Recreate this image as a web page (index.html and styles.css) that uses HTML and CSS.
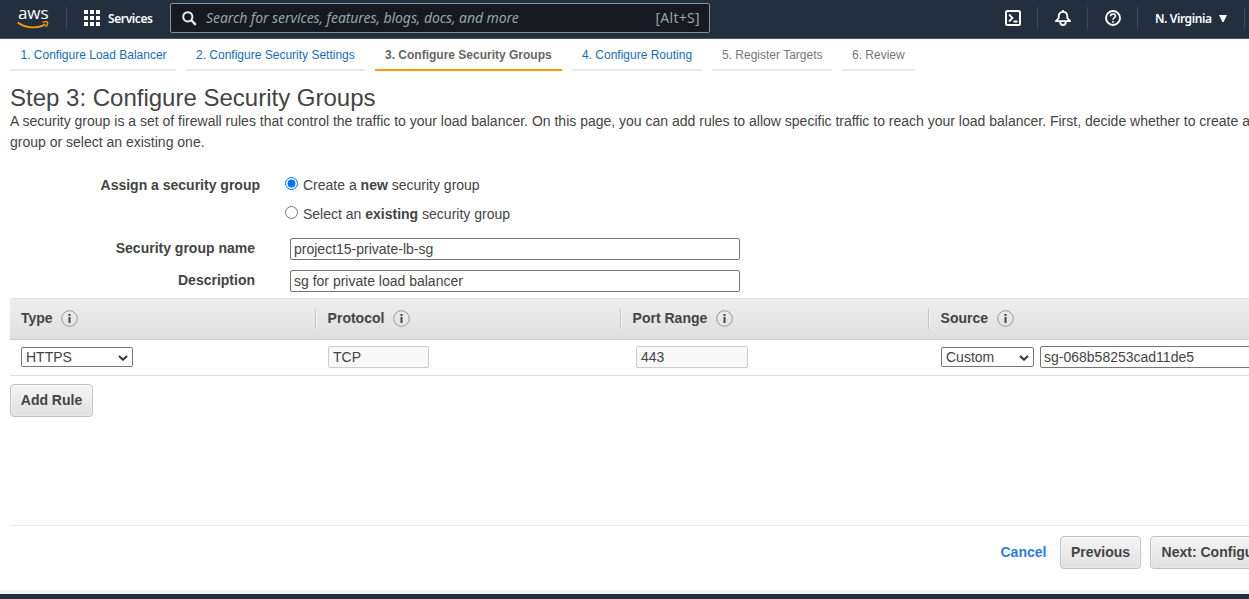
FILE: index.html
```html
<!DOCTYPE html>
<html lang="en">
<head>
<meta charset="utf-8">
<title>Step 3: Configure Security Groups</title>
<link rel="stylesheet" href="styles.css">
</head>
<body>
<header class="topbar">
  <div class="logo"><span class="logo-text">aws</span>
    <svg class="smile" width="32" height="9" viewBox="0 0 32 9" fill="none" stroke="#ff9900"><path d="M.8 1.500C8 7.500 21 7.800 28.500 3.200" stroke-width="1.800"/><path d="M25.500 1.500c2-.8 4.300-.9 5-.2.500.8-.3 3-1.700 4.700" stroke-width="1.300"/></svg>
  </div>
  <div class="services">
    <svg width="16" height="16" viewBox="0 0 16 16" fill="#fff"><path d="M0 0h4v4H0zM6 0h4v4H6zM12 0h4v4h-4zM0 6h4v4H0zM6 6h4v4H6zM12 6h4v4h-4zM0 12h4v4H0zM6 12h4v4H6zM12 12h4v4h-4z"/></svg>
    <span class="services-text">Services</span>
  </div>
  <div class="search">
    <svg width="15" height="15" viewBox="0 0 15 15" fill="none" stroke="#eaeded" stroke-width="2"><circle cx="5.800" cy="5.800" r="4.600"/><path d="M9.200 9.200l4.600 4.600" stroke-width="2.400"/></svg>
    <span class="search-text">Search for services, features, blogs, docs, and more</span>
    <span class="shortcut">[Alt+S]</span>
  </div>
  <div class="tools">
    <div class="tool"><svg width="16" height="16" viewBox="0 0 16 16" fill="none" stroke="#fff" stroke-width="2"><rect x="1" y="1" width="14" height="14" rx="1.500"/><path d="M4 4.500L7.500 8 4 11.500M8.500 11.500H12.500" stroke-width="1.800"/></svg></div>
    <div class="tool"><svg width="16" height="16" viewBox="0 0 16 16" fill="none" stroke="#fff" stroke-width="1.800" stroke-linejoin="round"><path d="M8 0v2M.9 11.200L3.700 8.200V6C4 3.300 5.600 1.800 8 1.800s4 1.500 4.300 4.200v2.200l2.800 3z"/><path d="M5.200 12c0 2 1.100 3 2.800 3s2.800-1 2.800-3"/></svg></div>
    <div class="tool"><svg width="16" height="16" viewBox="0 0 16 16" fill="none" stroke="#fff" stroke-width="1.900"><circle cx="8" cy="8" r="7"/><path d="M5.500 6.300C5.500 4.700 6.500 4 8 4s2.500.8 2.500 2.100C10.500 7.600 8 7.700 8 9.800M8 11v1.800" stroke-width="1.600"/></svg></div>
    <div class="region"><span class="region-text">N. Virginia</span><svg width="8" height="7" viewBox="0 0 8 7" fill="#fff"><path d="M0 0h8L4.600 7H3.400z"/></svg></div>
  </div>
</header>

<main class="page">
  <nav class="steps">
    <a class="step s1">1. Configure Load Balancer</a>
    <a class="step s2">2. Configure Security Settings</a>
    <a class="step s3 current">3. Configure Security Groups</a>
    <a class="step s4">4. Configure Routing</a>
    <a class="step s5 pending">5. Register Targets</a>
    <a class="step s6 pending">6. Review</a>
  </nav>
  <h1 class="title">Step 3: Configure Security Groups</h1>
  <p class="intro">A security group is a set of firewall rules that control the traffic to your load balancer. On this page, you can add rules to allow specific traffic to reach your load balancer. First, decide whether to create a new security<br>group or select an existing one.</p>

  <div class="assign">
    <div class="assign-label">Assign a security group</div>
    <div class="options">
      <label class="option"><input class="radio" type="radio" name="sg" checked><span>Create a <b>new</b> security group</span></label>
      <label class="option"><input class="radio" type="radio" name="sg"><span>Select an <b>existing</b> security group</span></label>
    </div>
  </div>
  <div class="field"><div class="field-label">Security group name</div><div class="box wide">project15-private-lb-sg</div></div>
  <div class="field"><div class="field-label">Description</div><div class="box wide">sg for private load balancer</div></div>

  <div class="rules">
    <div class="cols head">
      <div class="th"><span>Type</span><svg class="info" viewBox="0 0 17 17"><circle cx="8.500" cy="8.500" r="7.800"/><path d="M7.500 4h2v2h-2zM7.500 7h2v6h-2z"/></svg></div>
      <div class="th"><span>Protocol</span><svg class="info" viewBox="0 0 17 17"><circle cx="8.500" cy="8.500" r="7.800"/><path d="M7.500 4h2v2h-2zM7.500 7h2v6h-2z"/></svg></div>
      <div class="th"><span>Port Range</span><svg class="info" viewBox="0 0 17 17"><circle cx="8.500" cy="8.500" r="7.800"/><path d="M7.500 4h2v2h-2zM7.500 7h2v6h-2z"/></svg></div>
      <div class="th"><span>Source</span><svg class="info" viewBox="0 0 17 17"><circle cx="8.500" cy="8.500" r="7.800"/><path d="M7.500 4h2v2h-2zM7.500 7h2v6h-2z"/></svg></div>
    </div>
    <div class="cols row">
      <div class="td"><div class="box select type"><span>HTTPS</span><svg width="10" height="6" viewBox="0 0 10 6"><path d="M1 1l4 3.700L9 1"/></svg></div></div>
      <div class="td"><div class="box disabled proto">TCP</div></div>
      <div class="td port-cell"><div class="box disabled port">443</div></div>
      <div class="td"><div class="box select custom"><span>Custom</span><svg width="10" height="6" viewBox="0 0 10 6"><path d="M1 1l4 3.700L9 1"/></svg></div><div class="box source">sg-068b58253cad11de5</div></div>
    </div>
  </div>
  <button class="btn add">Add Rule</button>

  <div class="actions">
    <a class="cancel">Cancel</a>
    <button class="btn prev">Previous</button>
    <button class="btn next">Next: Configure Routing</button>
  </div>
</main>
<footer class="footer"></footer>
</body>
</html>
```
FILE: styles.css
```css
* { box-sizing: border-box; }
html { overflow: hidden; }
body {
  margin: 0;
  width: 1249px;
  height: 599px;
  overflow: hidden;
  display: flex;
  flex-direction: column;
  background: #fff;
  color: #444;
  font: 14px/21px "Liberation Sans", Arial, sans-serif;
}
svg { display: block; flex: none; }

.topbar {
  display: flex;
  flex: none;
  height: 39px;
  background: #232f3e;
  border-bottom: 1px solid #4b5563;
  color: #fff;
  font-family: "Noto Sans", "Open Sans", sans-serif;
}
.logo {
  width: 67px;
  height: 22px;
  margin-top: 7px;
  padding-left: 18px;
  border-right: 1px solid #3f4a57;
}
.logo-text { display: block; height: 14px; font: 500 17px/12px "Open Sans", sans-serif; letter-spacing: -0.1px; }
.smile { margin-left: -1px; }
.services { display: flex; align-items: center; width: 103px; height: 36px; padding-left: 17px; gap: 8px; }
.services-text, .region-text { font-weight: 600; font-size: 12px; white-space: nowrap; letter-spacing: -0.4px; }
.search {
  display: flex;
  align-items: center;
  width: 540px;
  height: 30px;
  margin-top: 3px;
  padding: 0 9px 0 11px;
  background: #16191f;
  border: 1px solid #879596;
  border-radius: 2px;
  color: #95a5a6;
  font-size: 14px;
  line-height: 20px;
}
.search-text { margin: 0 0 1px 9px; font-style: italic; white-space: nowrap; letter-spacing: -0.08px; }
.shortcut { margin: 0 0 1px auto; letter-spacing: 0.3px; }
.tools { display: flex; margin: 7px 0 0 278px; height: 22px; }
.tool { display: flex; align-items: center; justify-content: center; width: 50px; border-right: 1px solid #3f4a57; }
.region { display: flex; align-items: center; gap: 7px; width: 107px; padding-left: 17px; border-right: 1px solid #3f4a57; }

.page { flex: none; width: 1500px; height: 551px; padding-left: 10px; }
.steps { display: flex; gap: 10px; height: 32px; }
.step { padding: 6px 0 0 10px; border-bottom: 2px solid #eaeaea; color: #146eb4; font-size: 12px; line-height: 20px; white-space: nowrap; }
.s1 { width: 166px; padding-left: 10.5px; }
.s2 { width: 179px; }
.s3 { width: 187px; }
.s4 { width: 130px; }
.s5 { width: 120px; }
.s6 { width: 73px; }
.current { border-color: #f90; color: #666; font-weight: bold; }
.pending { color: #777; }
.title { margin: 13px 0 0; font-size: 24px; line-height: 27px; font-weight: normal; }
.intro { margin: 0; white-space: nowrap; }

.assign { display: flex; margin-top: 20px; }
.assign-label { width: 250px; padding-top: 1px; text-align: right; font-weight: bold; line-height: 22px; }
.options { margin-left: 25px; }
.option { display: flex; align-items: center; height: 24px; margin-bottom: 5px; gap: 5px; }
.radio { width: 13px; height: 13px; margin: 0 0 3px; }
.field { display: flex; height: 22px; margin-bottom: 10px; }
.assign + .field { margin-top: 7px; }
.field-label { width: 245px; margin-right: 35px; text-align: right; font-weight: bold; }
.box { height: 22px; padding: 0 3px; border: 1px solid #767676; border-radius: 2px; background: #fff; line-height: 21px; white-space: nowrap; }
.wide { width: 450px; }

.rules { margin-top: -4px; }
.cols { display: grid; grid-template-columns: 305px 305px 308px 582px; }
.head { height: 42px; padding-bottom: 1px; background: linear-gradient(#eee, #dfdfdf); border: solid #ccc; border-width: 1px 0; border-top-color: #e1e1e1; align-items: center; }
.th { display: flex; height: 20px; align-items: center; padding-left: 11px; font-weight: bold; }
.th + .th { padding-left: 11.6px; border-left: 1px solid #c4c4c4; box-shadow: inset 1px 0 #f5f5f5; }
.info { width: 17px; height: 17px; margin: 0 0 0 8.5px; }
.info circle { fill: none; stroke: #999; }
.info path { fill: #444; }
.row { height: 36px; padding-bottom: 1px; border-bottom: 1px solid #ddd; }
.td { display: flex; align-items: center; padding-left: 13px; gap: 6px; }
.td:first-child { padding-left: 11px; }
.port-cell { padding-left: 16px; }
.disabled { border-color: #ccc; background: #f8f8f8; padding-left: 4px; }
.select { display: flex; height: 20px; align-items: center; justify-content: space-between; padding: 1px 4px 0; }
.select path { fill: none; stroke: #333; stroke-width: 2; }
.type { width: 112px; }
.proto { width: 101px; }
.port { width: 112px; }
.custom { width: 93px; }
.source { width: 300px; }

.btn {
  height: 33px;
  padding: 0 0 1px;
  border: 1px solid #c3c3c3;
  border-radius: 4px;
  background: linear-gradient(#f5f5f5, #e0e0e0);
  box-shadow: inset 0 0 0 1px rgba(255, 255, 255, .3);
  color: #444;
  font: bold 14px "Liberation Sans", Arial, sans-serif;
  white-space: nowrap;
}
.add { display: block; width: 83px; margin-top: 8px; }
.actions { display: flex; align-items: center; margin-top: 108px; padding: 10px 0 0 990.5px; border-top: 1px solid #eaeaea; }
.cancel { width: 59.5px; color: #2a7fda; font-weight: bold; }
.prev { width: 81px; margin-right: 9px; }
.next { width: 185px; }
.footer { flex: none; height: 9px; background: #232f3e; border-top: 4px solid #f2f3f3; }
```
